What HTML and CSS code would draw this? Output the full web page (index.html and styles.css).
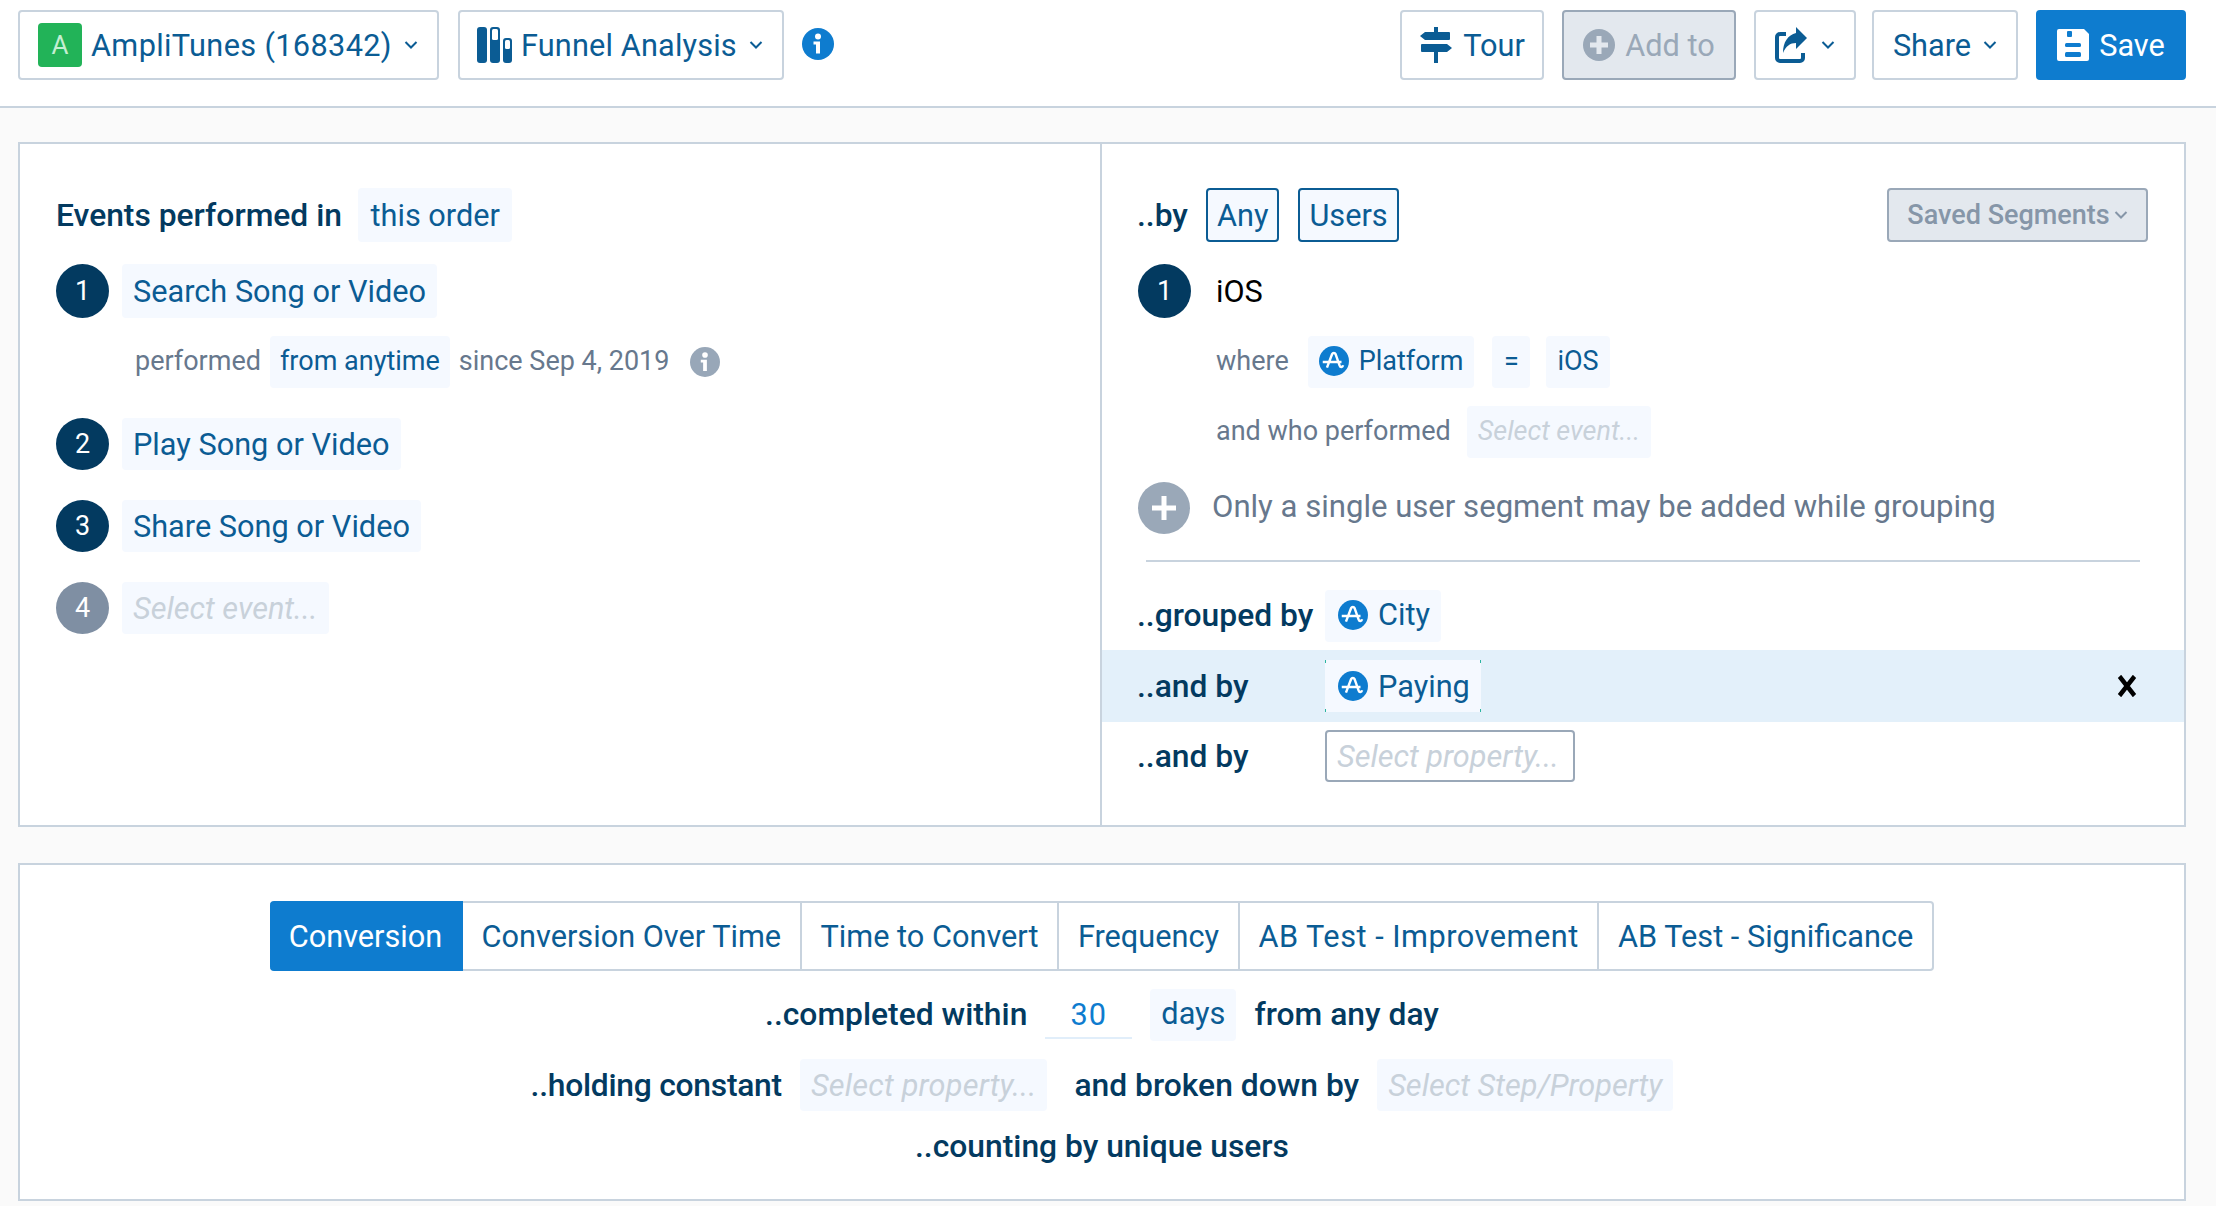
FILE: index.html
```html
<!DOCTYPE html>
<html lang="en">
<head>
  <meta charset="UTF-8" />
  <title>Funnel Analysis</title>
  <link rel="stylesheet" href="styles.css">
</head>
<body>
  <svg class="defs" width="0" height="0">
    <symbol id="amp" viewBox="0 0 32 32">
      <circle cx="16" cy="16" r="16" fill="#0e7ccf"/>
      <path d="M4 17h20M8.500 23 14 8.500c.7-1.500 3-1.500 3.600 0L22 21c.7 2 3 2 3.700-.5" fill="none" stroke="#fff" stroke-width="2.600"/>
    </symbol>
    <symbol id="info" viewBox="0 0 32 32">
      <circle cx="16" cy="16" r="16" fill="currentColor"/>
      <circle cx="16" cy="8.500" r="3" fill="#fff"/>
      <path d="M11.500 13.500h6.500v12h-4v-9h-2.500z" fill="#fff"/>
    </symbol>
    <symbol id="chev" viewBox="0 0 14 10">
      <path d="M1.500 2l5.500 5.500 5.500-5.500" fill="none" stroke="currentColor" stroke-width="2"/>
    </symbol>
  </svg>

  <header class="topbar">
    <div class="btn project">
      <span class="app-badge">A</span><span class="project-name">AmpliTunes (168342)</span>
      <svg class="chev"><use href="#chev"/></svg>
    </div>
    <div class="btn chart-type">
      <svg class="bars" viewBox="0 0 36 36" width="36" height="36">
        <rect x="0" width="10" height="36" rx="3" fill="#0b5c94"/>
        <rect x="13" width="10" height="36" rx="3" fill="#0b5c94"/>
        <rect x="15" y="2" width="6" height="11" rx="1.500" fill="#fff"/>
        <rect x="26" y="11" width="9" height="25" rx="3" fill="#0b5c94"/>
        <rect x="28" y="13" width="5" height="9" rx="1.500" fill="#fff"/>
      </svg>
      <span class="chart-name">Funnel Analysis</span>
      <svg class="chev"><use href="#chev"/></svg>
    </div>
    <svg class="info-top"><use href="#info"/></svg>

    <div class="top-right">
      <div class="btn tour">
        <svg viewBox="0 0 34 36" width="34" height="36">
          <path d="M15 0h4v5h11a1 1 0 0 1 1 1v6a1 1 0 0 1-1 1H6l-5-4 5-4h9zM3 17h25l5 4-5 4H19v11h-4V25H3a1 1 0 0 1-1-1v-6a1 1 0 0 1 1-1z" fill="#0b5c94"/>
        </svg>
        Tour
      </div>
      <div class="btn add-to">
        <svg viewBox="0 0 32 32" width="32" height="32">
          <circle cx="16" cy="16" r="16" fill="#9aa8b8"/>
          <path d="M16 7v18M7 16h18" stroke="#e3e8ee" stroke-width="5"/>
        </svg>
        Add to
      </div>
      <div class="btn export">
        <svg viewBox="0 0 32 36" width="32" height="36">
          <path d="M11 7H5a3 3 0 0 0-3 3v21a3 3 0 0 0 3 3h20a3 3 0 0 0 3-3v-5" fill="none" stroke="#0b5c94" stroke-width="4"/>
          <path d="M21 0l11 11-11 11v-6c-6 0-10 3-13 10 0-11 5-18 13-20z" fill="#0b5c94"/>
        </svg>
        <svg class="chev"><use href="#chev"/></svg>
      </div>
      <div class="btn share">
        Share
        <svg class="chev"><use href="#chev"/></svg>
      </div>
      <div class="btn save">
        <svg viewBox="0 0 32 32" width="32" height="32">
          <path d="M2 0h25l5 5v25a2 2 0 0 1-2 2H2a2 2 0 0 1-2-2V2a2 2 0 0 1 2-2z" fill="#fff"/>
          <rect x="10" y="2" width="5" height="6" rx="1" fill="#0e7ccf"/>
          <rect x="8" y="14" width="16" height="4" rx="1.500" fill="#0e7ccf"/>
          <rect x="8" y="23" width="16" height="5" rx="1.500" fill="#0e7ccf"/>
        </svg>
        Save
      </div>
    </div>
  </header>

  <section class="panel query">
    <div class="col events">
      <div class="row first">
        <b class="lead">Events performed in</b>
        <span class="chip big this-order">this order</span>
      </div>
      <div class="row step">
        <span class="num">1</span>
        <span class="chip big">Search Song or Video</span>
      </div>
      <div class="row sub performed">
        <span class="muted">performed</span>
        <span class="chip from-any">from anytime</span>
        <span class="muted">since Sep 4, 2019</span>
        <svg class="info-grey"><use href="#info"/></svg>
      </div>
      <div class="row step wide">
        <span class="num">2</span>
        <span class="chip big">Play Song or Video</span>
      </div>
      <div class="row step wide">
        <span class="num">3</span>
        <span class="chip big">Share Song or Video</span>
      </div>
      <div class="row step wide">
        <span class="num off">4</span>
        <span class="chip big holder">Select event...</span>
      </div>
    </div>

    <div class="col segments">
      <div class="inner">
        <div class="row first">
          <b class="lead">..by</b>
          <span class="chip big outlined">Any</span>
          <span class="chip big outlined">Users</span>
          <span class="btn saved">Saved Segments <svg class="chev"><use href="#chev"/></svg></span>
        </div>
        <div class="row step">
          <span class="num">1</span>
          <span class="seg-name">iOS</span>
        </div>
        <div class="row sub where">
          <span class="muted">where</span>
          <span class="chip prop"><svg class="amp"><use href="#amp"/></svg>Platform</span>
          <span class="chip eq">=</span>
          <span class="chip">iOS</span>
        </div>
        <div class="row sub who">
          <span class="muted">and who performed</span>
          <span class="chip holder">Select event...</span>
        </div>
        <div class="row add-seg">
          <svg class="plus" viewBox="0 0 52 52" width="52" height="52">
            <circle cx="26" cy="26" r="26" fill="#9aa8b8"/>
            <path d="M26 14v24M14 26h24" stroke="#fff" stroke-width="5"/>
          </svg>
          <span class="muted single">Only a single user segment may be added while grouping</span>
        </div>
      </div>
      <hr class="rule">
      <div class="group-row first-group">
        <b class="lead group-label">..grouped by</b>
        <span class="chip big prop"><svg class="amp"><use href="#amp"/></svg>City</span>
      </div>
      <div class="group-row active">
        <b class="lead group-label">..and by</b>
        <span class="chip big prop focused"><svg class="amp"><use href="#amp"/></svg>Paying</span>
        <svg class="close" viewBox="0 0 16 16" width="20" height="22" preserveAspectRatio="none">
          <path d="M2 1l12 14M14 1L2 15" stroke="#000" stroke-width="3.500"/>
        </svg>
      </div>
      <div class="group-row">
        <b class="lead group-label">..and by</b>
        <span class="chip big input">Select property...</span>
      </div>
    </div>
  </section>

  <section class="panel options">
    <div class="tabs">
      <span class="tab on">Conversion</span>
      <span class="tab">Conversion Over Time</span>
      <span class="tab">Time to Convert</span>
      <span class="tab">Frequency</span>
      <span class="tab tab-improve">AB Test - Improvement</span>
      <span class="tab">AB Test - Significance</span>
    </div>
    <div class="opt-row raised">
      <b class="lead">..completed within</b>
      <span class="days-input">30</span>
      <span class="chip big">days</span>
      <b class="lead">from any day</b>
    </div>
    <div class="opt-row">
      <b class="lead holding">..holding constant</b>
      <span class="chip big holder hold-chip">Select property...</span>
      <b class="lead broken">and broken down by</b>
      <span class="chip big holder">Select Step/Property</span>
    </div>
    <div class="opt-row last raised">
      <b class="lead">..counting by unique users</b>
    </div>
  </section>
</body>
</html>
```

FILE: styles.css
```css
:root {
  --link: #0b5c94;
  --dark: #033a60;
  --chip: #f5f9ff;
  --line: #c8d3de;
  --grey: #67788d;
  --holder: #c8d1da;
  --blue: #0e7ccf;
}

html, body {
  height: 100%;
}

body {
  margin: 0;
  overflow: hidden;
  background: #fafafa;
  font-family: Roboto, "Noto Sans", sans-serif;
  font-size: 30.7px;
  color: var(--dark);
}

.defs {
  position: absolute;
}

/* top bar */
.topbar {
  display: flex;
  align-items: flex-start;
  height: 96px;
  padding: 10px 30px 0 18px;
  background: #fff;
  border-bottom: 2px solid var(--line);
}

.btn {
  display: flex;
  align-items: center;
  justify-content: center;
  box-sizing: border-box;
  height: 70px;
  border: 2px solid var(--line);
  border-radius: 4px;
  background: #fff;
  color: var(--link);
  white-space: nowrap;
}

.chev {
  width: 14px;
  height: 10px;
  flex: none;
}

.project {
  justify-content: flex-start;
  width: 421px;
  padding-left: 18px;
}

.project-name {
  letter-spacing: .35px;
}

.project .chev {
  margin-left: 12px;
}

.app-badge {
  display: flex;
  align-items: center;
  justify-content: center;
  width: 44px;
  height: 44px;
  margin-right: 9px;
  border-radius: 4px;
  background: #22b358;
  color: #c4eed2;
  font-size: 26px;
}

.chart-type {
  justify-content: flex-start;
  width: 326px;
  margin-left: 19px;
  padding-left: 17px;
}

.bars {
  margin-right: 8px;
}

.chart-name {
  letter-spacing: .15px;
}

.chart-type .chev {
  margin-left: 12px;
}

.info-top {
  width: 32px;
  height: 32px;
  margin: 18px 0 0 18px;
  color: var(--blue);
}

.top-right {
  display: flex;
  gap: 18px;
  margin-left: auto;
}

.tour {
  width: 144px;
  gap: 10px;
}

.add-to {
  width: 174px;
  gap: 10px;
  background: #e3e8ee;
  border-color: #9aa8b8;
  color: #9aa8b8;
}

.export {
  width: 102px;
  gap: 14px;
}

.share {
  width: 146px;
  margin-left: -2px;
  gap: 12px;
}

.save {
  width: 150px;
  gap: 10px;
  background: var(--blue);
  border-color: var(--blue);
  color: #fff;
}

/* panels */
.panel {
  margin: 0 30px 0 18px;
  border: 2px solid var(--line);
  background: #fff;
}

.query {
  display: flex;
  height: 685px;
  box-sizing: border-box;
  margin-top: 34px;
}

.col {
  box-sizing: border-box;
}

.events {
  flex: 0 0 1082px;
  padding: 44px 0 0 36px;
  border-right: 2px solid var(--line);
}

.segments {
  flex: 1;
  padding-top: 44px;
}

.inner {
  padding-left: 35px;
}

.row {
  display: flex;
  align-items: center;
}

.first {
  height: 54px;
}

.step {
  height: 54px;
  margin-top: 22px;
  gap: 13px;
}

.step.wide {
  height: 52px;
  margin-top: 30px;
}

.sub {
  height: 52px;
  margin-top: 18px;
  padding-left: 79px;
  font-size: 27px;
}

.lead {
  font-size: 31.8px;
  font-weight: 500;
  white-space: nowrap;
}

.chip {
  display: inline-flex;
  align-items: center;
  box-sizing: border-box;
  height: 52px;
  padding: 0 11px;
  border-radius: 4px;
  background: var(--chip);
  color: var(--link);
  white-space: nowrap;
}

.chip.big {
  height: 100%;
}

.sub .chip,
.sub .muted,
.add-seg .muted,
.first-group .lead,
.first-group .chip,
.raised .lead,
.raised .chip,
.raised .days-input {
  padding-bottom: 3px;
}

.holder {
  color: var(--holder);
  font-style: italic;
}

.muted {
  color: var(--grey);
  white-space: nowrap;
}

.num {
  display: flex;
  align-items: center;
  justify-content: center;
  flex: none;
  width: 53px;
  height: 100%;
  border-radius: 50%;
  background: var(--dark);
  color: #fff;
  font-size: 27px;
}

.segments .num,
.plus {
  margin-left: 1px;
}

.num.off {
  background: #7f8fa3;
}

.this-order {
  margin-left: 16px;
  padding: 0 12.500px;
}

.from-any {
  margin: 0 9px;
  padding: 0 10px;
}

.info-grey {
  width: 30px;
  height: 30px;
  margin-left: 21px;
  color: #98a7b8;
}

.outlined {
  margin-left: 18px;
  padding: 0 9px;
  border: 2px solid var(--link);
}

.outlined + .outlined {
  margin-left: 19px;
}

.saved {
  width: 261px;
  height: 54px;
  margin-left: auto;
  margin-right: 36px;
  gap: 4px;
  background: #e3e8ee;
  border-color: #9aa8b8;
  color: #8696a8;
  font-size: 27px;
  font-weight: 500;
}

.seg-name {
  margin-left: 12px;
  color: #000;
}

.where .prop {
  margin-left: 19px;
}

.eq {
  justify-content: center;
  width: 38px;
  margin-left: 18px;
  padding: 0;
}

.eq + .chip {
  margin-left: 16px;
}

.prop {
  gap: 10px;
}

.amp {
  width: 30px;
  height: 32px;
  flex: none;
}

.who .holder {
  margin-left: 16px;
}

.add-seg {
  height: 52px;
  margin-top: 24px;
}

.single {
  margin-left: 22px;
  font-size: 31.100px;
}

.rule {
  height: 2px;
  margin: 26px 44px 28px 44px;
  border: 0;
  background: var(--line);
}

.group-row {
  display: flex;
  align-items: center;
  height: 52px;
  padding-left: 35px;
}

.group-label {
  width: 188px;
  flex: none;
}

.first-group {
  margin-bottom: 8px;
}

.group-row .chip {
  padding-left: 13px;
}

.active {
  box-sizing: border-box;
  height: 72px;
  margin-bottom: 8px;
  padding-top: 10px;
  padding-bottom: 10px;
  background: #e3f0fa;
}

.focused {
  background-image:
    linear-gradient(#2bb5a0, #2bb5a0), linear-gradient(#2bb5a0, #2bb5a0),
    linear-gradient(#2bb5a0, #2bb5a0), linear-gradient(#2bb5a0, #2bb5a0);
  background-position: 0 0, 100% 0, 0 100%, 100% 100%;
  background-repeat: no-repeat;
  background-size: 1px 3px;
  border-radius: 0;
}

.close {
  margin-left: auto;
  margin-right: 47px;
}

.input {
  width: 250px;
  padding-left: 10px !important;
  border: 2px solid #9aa8b8;
  background: #fff;
  color: var(--holder);
  font-style: italic;
}

/* bottom panel */
.options {
  box-sizing: border-box;
  height: 338px;
  margin-top: 36px;
  padding-top: 36px;
}

.tabs {
  display: flex;
  justify-content: center;
  height: 70px;
}

.tab {
  display: flex;
  align-items: center;
  padding: 0 18.700px;
  border: 2px solid var(--line);
  border-left: 0;
  color: var(--link);
  white-space: nowrap;
}

.tab-improve {
  letter-spacing: .5px;
}

.tab:last-child {
  border-radius: 0 4px 4px 0;
}

.tab.on {
  border-color: var(--blue);
  border-radius: 4px 0 0 4px;
  background: var(--blue);
  color: #fff;
}

.opt-row {
  display: flex;
  justify-content: center;
  align-items: center;
  gap: 18px;
  height: 52px;
  margin-top: 18px;
}

.opt-row.last {
  margin-top: 10px;
}

.days-input {
  width: 87px;
  height: 50px;
  align-self: flex-start;
  box-sizing: border-box;
  padding-top: 8px;
  border-bottom: 2px solid #e1eefa;
  color: var(--blue);
  letter-spacing: 1px;
  text-align: center;
}

.holding {
  letter-spacing: -.25px;
}

.hold-chip {
  letter-spacing: .2px;
}

.broken {
  margin-left: 9px;
}
```
